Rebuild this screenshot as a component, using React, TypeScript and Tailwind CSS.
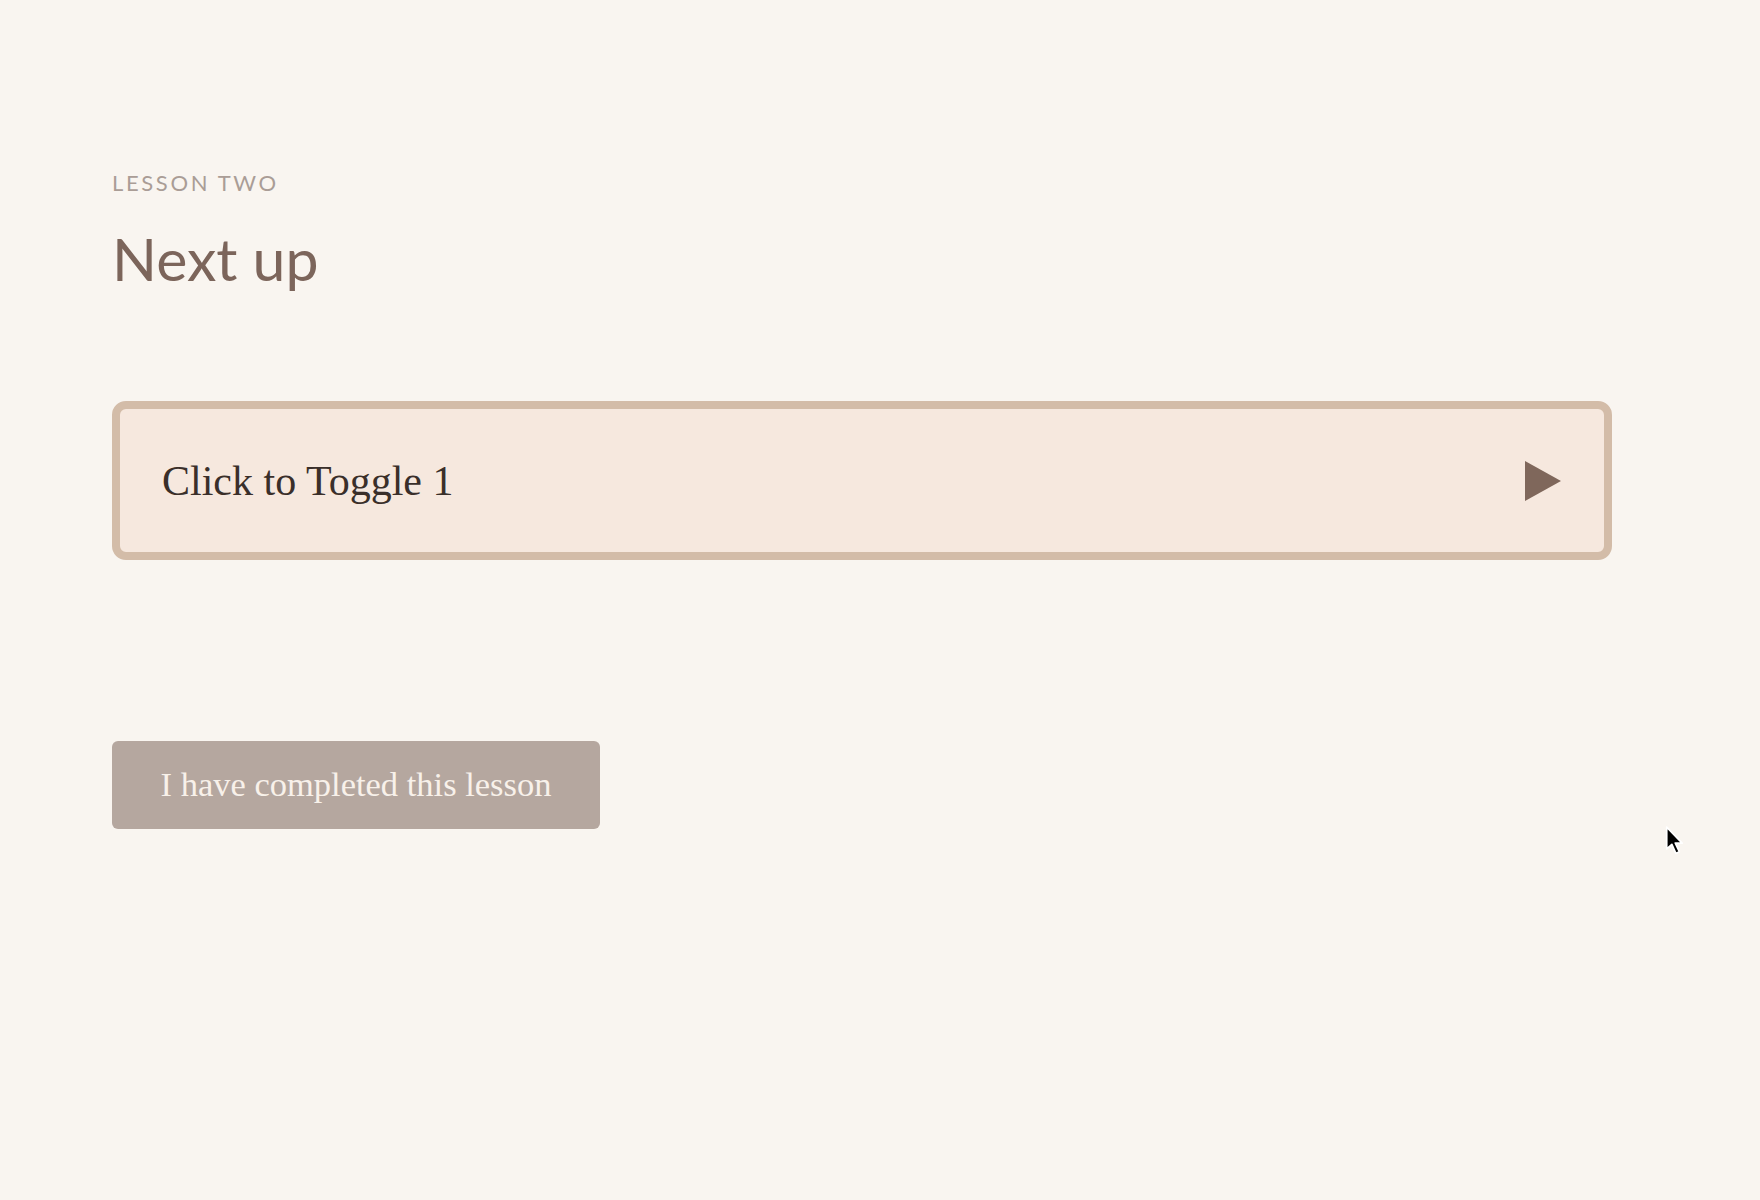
export default function App() {
  return (
    <div className="relative min-h-screen bg-[#f9f5f0] font-['Lato','Liberation_Sans',sans-serif]">
      <div className="pl-[112px] pr-[148px] pt-[170px]">
        <p className="text-[22px] leading-[26px] tracking-[0.12em] text-[#aa9d96]">LESSON TWO</p>
        <h1 className="mt-[31px] text-[59px] leading-[64px] text-[#7c655b]">Next up</h1>

        <button className="mt-[110px] flex h-[159px] w-full items-center justify-between rounded-[14px] border-[8px] border-[#d3bca8] bg-[#f6e8de] px-[42px] text-left">
          <span className="font-['Liberation_Serif',serif] text-[42px] leading-none text-[#3a2f2a]">Click to Toggle 1</span>
          <svg width="36" height="40" viewBox="0 0 36 40" className="mr-[1px]">
            <path d="M0 0 L36 20 L0 40 Z" fill="#7f675b" />
          </svg>
        </button>

        <button className="mt-[181px] flex h-[88px] w-[488px] items-center justify-center rounded-[6px] bg-[#b5a79f] font-['Liberation_Serif',serif] text-[34.5px] text-[#f8f1ea]">
          I have completed this lesson
        </button>
      </div>

      <svg className="absolute left-[1665px] top-[826px]" width="24" height="32" viewBox="0 0 20 28">
        <path d="M1 1 L1 20 L5.5 16 L9 24 L12 22.5 L8.5 15 L14.5 15 Z" fill="#000" stroke="#fff" strokeWidth="1.5" strokeLinejoin="round" />
      </svg>
    </div>
  );
}
